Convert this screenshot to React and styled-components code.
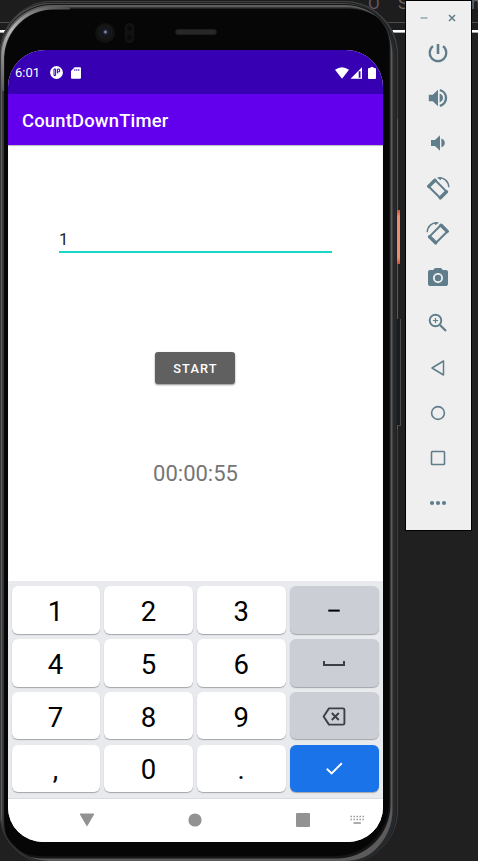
import React from "react";
import styled, { createGlobalStyle, css } from "styled-components";
import { MdPhotoCamera } from "react-icons/md";

const GlobalStyle = createGlobalStyle`
  * { box-sizing: border-box; }
  html, body { margin: 0; background: #202020; }
  body { font-family: Roboto, "Liberation Sans", sans-serif; }
  button { font: inherit; border: 0; padding: 0; margin: 0; }
  svg { display: block; flex: none; }
`;

const Desktop = styled.main`
  position: relative;
  display: flex;
  align-items: flex-start;
  width: 478px;
  height: 861px;
  overflow: hidden;
  background: #202020;
`;

/* Editor window that shows behind the emulator */
const EditorStrip = styled.div`
  position: absolute;
  inset: 0 0 auto 0;
  height: 33px;
  background: #1d1d1d;
  border-bottom: 1px solid #a8a8a8;
  box-shadow: inset 0 -2px 0 #ffffff;
  overflow: hidden;
`;

const EditorRule = styled.div`
  height: 23px;
  border-bottom: 1px solid #4d4d4d;
`;

const EditorText = styled.span`
  position: absolute;
  top: -7px;
  left: ${(p) => p.$left}px;
  font-size: 17px;
  line-height: 20px;
  color: ${(p) => p.$color || "#6d6862"};
`;

const Phone = styled.section`
  position: relative;
  flex: none;
  width: 398px;
  height: 863px;
  margin-top: 1px;
  padding: 49px 15px 21px 8px;
  border-radius: 52px 54px 54px 50px;
  background: #060607;
  box-shadow:
    inset -1px 1px 0 #3e4042,
    inset -2px 2px 0 #1f2123,
    inset 1px 0 0 #35373a,
    inset -5.5px 0 0 #26292b,
    inset 0 3px 0 #4a4a4b,
    inset 0 4px 0 #151515,
    inset 0 -3px 0 #2c2c2d,
    inset 2px 6px 0 #5e5e5f,
    inset -7.5px -5.5px 0 #5c5a5a,
    inset 4px 7.5px 1px #3a3a3b,
    inset -9px -8px 1px #161617;
`;

const CornerShine = styled.svg`
  position: absolute;
  left: 0;
  top: 0;
`;

const Camera = styled.div`
  position: absolute;
  left: 95px;
  top: 22px;
  width: 20px;
  height: 20px;
  border-radius: 50%;
  background: radial-gradient(circle at 52% 45%, #9097a8 0 0.5px, #202534 2px, #0e0f12 5px, #1e1e1e 6px, #131313 7px, #101010 10px);
`;

const Sensor = styled.div`
  position: absolute;
  left: 125px;
  top: 22px;
  width: 9px;
  height: 20px;
  border-radius: 4px;
  border: 1px solid #131313;
  background:
    radial-gradient(circle at 50% 25%, #090909 2px, transparent 3px),
    radial-gradient(circle at 50% 75%, #090909 2px, transparent 3px),
    #111111;
`;

const Speaker = styled.div`
  position: absolute;
  left: 175px;
  top: 28px;
  width: 42px;
  height: 6px;
  border-radius: 3px;
  border: 1px solid #1c1c1c;
  background: #272727;
`;

const SideLine = styled.div`
  position: absolute;
  left: 397px;
  top: 118px;
  width: 1px;
  height: 310px;
  background: #5b5b5b;
`;

const SideButton = styled.div`
  position: absolute;
  left: 397px;
  top: ${(p) => p.$top}px;
  height: ${(p) => p.$height}px;
  ${(p) =>
    p.$power
      ? css`
          width: 3px;
          background: linear-gradient(#d2502f, #ef8b6f 12%, #ef8b6f 88%, #d2502f);
        `
      : css`
          width: 4px;
          background: #1b1c1d;
          border: solid #4a4a4a;
          border-width: 0 1px 1px 0;
        `}
`;

const Screen = styled.div`
  display: flex;
  flex-direction: column;
  width: 375px;
  height: 792px;
  border-radius: 37px 37px 35px 35px;
  overflow: hidden;
  background: #ffffff;
`;

const StatusBar = styled.header`
  display: flex;
  align-items: center;
  flex: none;
  height: 44px;
  padding: 1px 6px 0 7px;
  background: #3700b3;
  color: #ffffff;
`;

const Clock = styled.span`
  width: 35px;
  padding-top: 1px;
  font-size: 13px;
  line-height: 16px;
`;

const StatusIcons = styled.div`
  display: flex;
  align-items: center;
  gap: ${(p) => p.$gap}px;
  margin-left: ${(p) => (p.$end ? "auto" : "0")};
`;

const AppBar = styled.div`
  display: flex;
  align-items: center;
  flex: none;
  height: 51px;
  padding: 3px 14px 0;
  background: #6200ee;
  color: #ffffff;
`;

const Title = styled.h1`
  margin: 0;
  font-size: 18.4px;
  line-height: 24px;
  font-weight: 500;
  letter-spacing: 0.2px;
`;

const Content = styled.div`
  display: flex;
  flex-direction: column;
  align-items: center;
  flex: none;
  height: 436px;
  box-shadow: inset 0 1px 1px #b9b9c2;
`;

const MinutesField = styled.input`
  width: 273px;
  height: 26px;
  margin-top: 82px;
  padding: 0;
  border: 0;
  border-bottom: 2px solid #17d8c7;
  border-radius: 0;
  outline: none;
  background: transparent;
  color: #212121;
  font-family: inherit;
  font-size: 16.5px;
`;

const StartButton = styled.button`
  width: 80px;
  height: 32px;
  margin: 99px 2px 0 0;
  padding: 1px 0 0 2px;
  border-radius: 3px;
  background: #606060;
  box-shadow: 0 1px 2px rgba(0, 0, 0, 0.45);
  color: #ffffff;
  font-size: 12.8px;
  font-weight: 500;
  letter-spacing: 1.15px;
`;

const TimerText = styled.div`
  margin-top: 77px;
  font-size: 22px;
  line-height: 26px;
  color: #757575;
`;

const Keyboard = styled.div`
  display: grid;
  grid-template-columns: repeat(4, 1fr);
  grid-auto-rows: 47.4px;
  gap: 5.4px 4px;
  flex: none;
  height: 218px;
  padding: 5.4px 4px 0 3.6px;
  background: #e8eaed;
  border-bottom: 1px solid #d9dbde;
`;

const keyTones = {
  number: ["#ffffff", "#000000"],
  special: ["#cbced5", "#3c4043"],
  action: ["#1a73e8", "#ffffff"],
};

const Key = styled.button`
  display: flex;
  align-items: center;
  justify-content: center;
  border-radius: 6px;
  padding: 4px 1px 0 0;
  background: ${(p) => keyTones[p.$tone][0]};
  color: ${(p) => keyTones[p.$tone][1]};
  box-shadow: 0 1px 1px rgba(60, 64, 67, 0.4);
  font-size: 27.5px;
  line-height: 32px;
`;

const NavBar = styled.nav`
  display: grid;
  grid-template-columns: 50px 57px 51px 57px 51px 57px 52px;
  align-items: center;
  justify-items: center;
  flex: none;
  height: 43px;
  padding-bottom: 2px;
  background: #ffffff;
  color: #929292;
`;

const NavSlot = styled.div`
  grid-column: ${(p) => p.$column};
`;

const Toolbar = styled.aside`
  position: relative;
  flex: none;
  width: 67px;
  height: 531px;
  margin-left: 7px;
  border: 1px solid #000000;
  background: #efefef;
  color: #607d8b;
`;

const WindowControls = styled.div`
  display: flex;
  justify-content: space-between;
  align-items: center;
  height: 29px;
  padding: 5px 15px 0 14px;
`;

const ToolButton = styled.button`
  display: flex;
  align-items: center;
  justify-content: center;
  width: 64px;
  height: 45px;
  background: transparent;
  color: inherit;
`;

const Svg = ({ size = 24, w, h, box = "0 0 24 24", children }) => (
  <svg width={w || size} height={h || size} viewBox={box} fill="none">
    {children}
  </svg>
);

const RotateIcon = ({ flip }) => (
  <Svg>
    <g transform={flip ? "translate(24 0) scale(-1 1)" : undefined}>
      <path d="M2.4 10.2L8.8 3.8L20.8 15.9L14.5 22.2Z" stroke="currentColor" strokeWidth="2" strokeLinejoin="round" />
      <path d="M2.8 10.4L9 4.2M20.4 15.7L14.3 21.8" stroke="currentColor" strokeWidth="3.4" strokeLinecap="round" />
      <path d="M12.5 1.8C18 1.2 22.6 5.5 22.8 11.2" stroke="currentColor" strokeWidth="1.4" />
      <path d="M11 1.4L15.6 1.2L14.6 4.3Z" fill="currentColor" />
    </g>
  </Svg>
);

const Speakerphone = ({ loud }) => (
  <Svg>
    {loud ? (
      <>
        <path d="M2.8 8.8H6.8L12 3.8V20.2L6.8 15.2H2.8Z" fill="currentColor" />
        <path d="M13.6 7.6Q17 9 17 12T13.6 16.4Z" fill="currentColor" />
        <path d="M13.8 4.2A8 8 0 0 1 13.8 19.8" stroke="currentColor" strokeWidth="2.4" />
      </>
    ) : (
      <>
        <path d="M5 9H9L14 4.2V19.8L9 15H5Z" fill="currentColor" />
        <path d="M15.4 7.6Q18.8 9 18.8 12T15.4 16.4Z" fill="currentColor" />
      </>
    )}
  </Svg>
);

const tools = [
  ["Power", (
    <Svg>
      <path d="M12 3V13" stroke="currentColor" strokeWidth="2.6" />
      <path d="M7 5.2A8.3 8.3 0 1 0 17 5.2" stroke="currentColor" strokeWidth="2.3" />
    </Svg>
  )],
  ["Volume up", <Speakerphone loud />],
  ["Volume down", <Speakerphone />],
  ["Rotate left", <RotateIcon />],
  ["Rotate right", <RotateIcon flip />],
  ["Take screenshot", <MdPhotoCamera size={24} />],
  ["Zoom", (
    <Svg>
      <circle cx="9.5" cy="9.5" r="5.8" stroke="currentColor" strokeWidth="1.9" />
      <path d="M9.5 6.9V12.1M6.9 9.5H12.1" stroke="currentColor" strokeWidth="1.2" />
      <path d="M14 14L20 20" stroke="currentColor" strokeWidth="2.2" />
    </Svg>
  )],
  ["Back", <Svg><path d="M17.5 5V19L6 12Z" stroke="currentColor" strokeWidth="1.5" strokeLinejoin="round" /></Svg>],
  ["Home", <Svg><circle cx="12" cy="12" r="6.4" stroke="currentColor" strokeWidth="1.6" /></Svg>],
  ["Overview", <Svg><rect x="5.5" y="5.5" width="13" height="13" rx="0.8" stroke="currentColor" strokeWidth="1.6" /></Svg>],
  ["More", <Svg><g fill="currentColor"><circle cx="6" cy="12" r="2.1" /><circle cx="12" cy="12" r="2.1" /><circle cx="18" cy="12" r="2.1" /></g></Svg>],
];

const MinusGlyph = <Svg><path d="M6.3 10.6H17.7" stroke="#000" strokeWidth="2" /></Svg>;
const SpaceGlyph = <Svg><path d="M2 8V12H22V8" stroke="currentColor" strokeWidth="2" /></Svg>;
const DeleteGlyph = (
  <Svg>
    <path d="M7 2.4H21Q22.4 2.4 22.4 3.8V17.2Q22.4 18.6 21 18.6H7L1.6 10.5Z" stroke="currentColor" strokeWidth="1.9" strokeLinejoin="round" />
    <path d="M9.8 7L16.8 14M16.8 7L9.8 14" stroke="currentColor" strokeWidth="1.9" />
  </Svg>
);
const CheckGlyph = <Svg><path d="M4.8 10.8L9.6 15.4L19.8 5.3" stroke="currentColor" strokeWidth="1.9" /></Svg>;

const keys = [
  ["1"], ["2"], ["3"], [MinusGlyph, "special", "minus"],
  ["4"], ["5"], ["6"], [SpaceGlyph, "special", "space"],
  ["7"], ["8"], ["9"], [DeleteGlyph, "special", "delete"],
  [","], ["0"], ["."], [CheckGlyph, "action", "done"],
];

export default function App() {
  return (
    <>
      <GlobalStyle />
      <Desktop>
        <EditorStrip>
          <EditorRule />
          <EditorText $left={368} $color="#685567">O</EditorText>
          <EditorText $left={398}>S</EditorText>
          <EditorText $left={471}>m</EditorText>
        </EditorStrip>

        <Phone>
          <CornerShine width="70" height="90" viewBox="0 0 70 90" fill="none">
            <defs>
              <linearGradient id="shine" x1="0" y1="90" x2="65" y2="0" gradientUnits="userSpaceOnUse">
                <stop offset="0" stopColor="#5a5a5a" />
                <stop offset="0.5" stopColor="#b8b8b8" />
                <stop offset="1" stopColor="#444444" />
              </linearGradient>
            </defs>
            <path d="M2.6 90V56C3.5 29 25 7.5 53 7H70" stroke="url(#shine)" strokeWidth="3" />
          </CornerShine>
          <Camera />
          <Sensor />
          <Speaker />
          <SideLine />
          <SideButton $power $top={209} $height={54} />
          <SideButton $top={318} $height={107} />

          <Screen>
            <StatusBar>
              <Clock>6:01</Clock>
              <StatusIcons $gap={8}>
                <Svg size={13} box="0 0 13 13">
                  <circle cx="6.5" cy="6.5" r="6.4" fill="#fff" />
                  <path d="M5.6 3H4V9.6H5.6V3" stroke="#3700b3" strokeWidth="1" />
                  <path d="M7.4 7.4V3.1H9.6V5.8H7.4" stroke="#3700b3" strokeWidth="1" />
                </Svg>
                <Svg w={10} h={12} box="0 0 10 12">
                  <path d="M3.6 0.3H9Q10 0.3 10 1.3V10.7Q10 11.7 9 11.7H1Q0 11.7 0 10.7V4Z" fill="#fff" />
                  <path d="M3.8 2V4M5.8 2V4M7.8 2V4" stroke="#3700b3" strokeWidth="0.8" />
                </Svg>
              </StatusIcons>
              <StatusIcons $end $gap={1}>
                <Svg w={14} h={12} box="0 0 14 12">
                  <path d="M0 2.8Q7 -2.4 14 2.8L7 11.7Z" fill="#fff" />
                </Svg>
                <Svg w={13} h={12} box="0 0 13 12">
                  <path d="M0.5 11.8L12 0.3V11.8Z" fill="#fff" />
                  <path d="M9.6 4.2V10.8" stroke="#3700b3" strokeWidth="1.8" />
                </Svg>
                <Svg w={13} h={12} box="0 0 13 12">
                  <path d="M6.5 0H9.5V1H11Q12 1 12 2V11Q12 12 11 12H5Q4 12 4 11V2Q4 1 5 1H6.5Z" fill="#fff" />
                </Svg>
              </StatusIcons>
            </StatusBar>

            <AppBar>
              <Title>CountDownTimer</Title>
            </AppBar>

            <Content>
              <MinutesField defaultValue="1" aria-label="Minutes" />
              <StartButton>START</StartButton>
              <TimerText>00:00:55</TimerText>
            </Content>

            <Keyboard>
              {keys.map(([face, tone = "number", label]) => (
                <Key key={label || face} $tone={tone} aria-label={label}>
                  {face}
                </Key>
              ))}
            </Keyboard>

            <NavBar>
              <NavSlot $column={2}>
                <Svg w={16} h={14} box="0 0 16 14"><path d="M1.2 1H14.8L8 12.8Z" fill="currentColor" stroke="currentColor" strokeLinejoin="round" /></Svg>
              </NavSlot>
              <NavSlot $column={4}>
                <Svg size={14} box="0 0 14 14"><circle cx="7" cy="7" r="6.6" fill="currentColor" /></Svg>
              </NavSlot>
              <NavSlot $column={6}>
                <Svg size={14} box="0 0 14 14"><rect width="14" height="14" rx="1" fill="currentColor" /></Svg>
              </NavSlot>
              <NavSlot $column={7}>
                <Svg w={14} h={10} box="0 0 14 10">
                  <path d="M0.5 1.5H14M0.5 4.5H14" stroke="currentColor" strokeWidth="1.4" strokeDasharray="1.4 1.6" />
                  <path d="M3.5 8H10.8" stroke="currentColor" strokeWidth="1.4" />
                </Svg>
              </NavSlot>
            </NavBar>
          </Screen>
        </Phone>

        <Toolbar>
          <WindowControls>
            <Svg w={8} h={8} box="0 0 8 8"><path d="M0.5 4H7.5" stroke="#9aabb3" strokeWidth="1.6" /></Svg>
            <Svg w={8} h={8} box="0 0 8 8"><path d="M1 1L7 7M7 1L1 7" stroke="currentColor" strokeWidth="1.5" /></Svg>
          </WindowControls>
          {tools.map(([label, icon]) => (
            <ToolButton key={label} aria-label={label}>{icon}</ToolButton>
          ))}
        </Toolbar>
      </Desktop>
    </>
  );
}
